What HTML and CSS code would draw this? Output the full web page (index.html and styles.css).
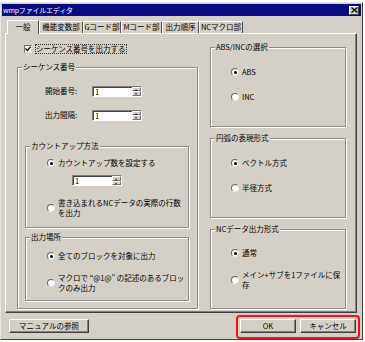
FILE: index.html
```html
<!DOCTYPE html>
<html lang="ja">
<head>
<meta charset="utf-8">
<title>wmpファイルエディタ</title>
<link rel="stylesheet" href="styles.css">
</head>
<body>
<div class="window">
  <div class="titlebar">
    <span class="title">wmpファイルエディタ</span>
    <span class="close"><svg width="7" height="6" viewBox="0 0 7 6"><path d="M0.5 0.5 L6.5 5.5 M6.5 0.5 L0.5 5.5" stroke="#000" stroke-width="1.3" fill="none"/></svg></span>
  </div>
  <div class="tabs">
    <div class="tab active w1">一般</div>
    <div class="tab w2">機能変数部</div>
    <div class="tab w3">Gコード部</div>
    <div class="tab w4">Mコード部</div>
    <div class="tab w5">出力順序</div>
    <div class="tab w6">NCマクロ部</div>
  </div>
  <div class="panel">
    <div class="col-left">
      <div class="check-row">
        <span class="checkbox"><svg width="6" height="6" viewBox="0 0 6 6"><path d="M0.5 2.5 L2.3 4.6 L5.6 0.8" stroke="#000" stroke-width="1.3" fill="none"/></svg></span>
        <span class="focus">シーケンス番号を出力する</span>
      </div>
      <div class="group g-seq">
        <div class="gtitle">シーケンス番号</div>
        <div class="field-row r1"><span class="flabel">開始番号:</span><span class="spin"><span class="spin-text">1</span><span class="spin-btns"><span class="sb up"></span><span class="sb down"></span></span></span></div>
        <div class="field-row r2"><span class="flabel">出力間隔:</span><span class="spin"><span class="spin-text">1</span><span class="spin-btns"><span class="sb up"></span><span class="sb down"></span></span></span></div>
        <div class="group g-count">
          <div class="gtitle">カウントアップ方法</div>
          <div class="option o-c1"><span class="radio on"></span><span>カウントアップ数を設定する</span></div>
          <div class="spin spin-c"><span class="spin-text">1</span><span class="spin-btns"><span class="sb up"></span><span class="sb down"></span></span></div>
          <div class="option two o-c2"><span class="radio"></span><span>書き込まれるNCデータの実際の行数<br>を出力</span></div>
        </div>
        <div class="group g-out">
          <div class="gtitle">出力場所</div>
          <div class="option o-o1"><span class="radio on"></span><span>全てのブロックを対象に出力</span></div>
          <div class="option two o-o2"><span class="radio"></span><span>マクロで “@1@” の記述のあるブロッ<br>クのみ出力</span></div>
        </div>
      </div>
    </div>
    <div class="col-right">
      <div class="group g-r">
        <div class="gtitle">ABS/INCの選択</div>
        <div class="options">
          <div class="option"><span class="radio on"></span><span>ABS</span></div>
          <div class="option"><span class="radio"></span><span>INC</span></div>
        </div>
      </div>
      <div class="group g-r">
        <div class="gtitle">円弧の表現形式</div>
        <div class="options">
          <div class="option"><span class="radio on"></span><span>ベクトル方式</span></div>
          <div class="option"><span class="radio"></span><span>半径方式</span></div>
        </div>
      </div>
      <div class="group g-r g-nc">
        <div class="gtitle">NCデータ出力形式</div>
        <div class="options">
          <div class="option"><span class="radio on"></span><span>通常</span></div>
          <div class="option two"><span class="radio"></span><span>メイン+サブを1ファイルに保<br>存</span></div>
        </div>
      </div>
    </div>
  </div>
  <div class="footer">
    <button class="btn btn-manual">マニュアルの参照</button>
    <div class="highlight">
      <button class="btn btn-ok">OK</button>
      <button class="btn btn-cancel">キャンセル</button>
    </div>
  </div>
</div>
</body>
</html>
```

FILE: styles.css
```css
* { box-sizing: border-box; }
html, body { margin: 0; padding: 0; background: #ffffff; }
body {
  font-family: "Noto Sans CJK JP", "Noto Sans", sans-serif;
  font-size: 7.5px;
  line-height: 8px;
  color: #000;
}
.window {
  width: 363px;
  height: 338px;
  margin-top: 2px;
  background: #d4d0c8;
  border: 1px solid;
  border-color: #e8e6e0 #404040 #404040 #e8e6e0;
  padding: 1px 1px 0 1px;
  display: flex;
  flex-direction: column;
}
.titlebar {
  height: 12px;
  background: #0a0a80;
  color: #fff;
  display: flex;
  align-items: center;
  justify-content: space-between;
  padding: 0 2px 0 1px;
}
.title { font-size: 7px; letter-spacing: -0.2px; }
.close {
  width: 10px;
  height: 9px;
  background: #d4d0c8;
  border: 1px solid;
  border-color: #fff #404040 #404040 #fff;
  display: flex;
  align-items: center;
  justify-content: center;
}
.tabs {
  margin-top: 4px;
  height: 13px;
  padding-left: 5px;
  display: flex;
  align-items: flex-end;
  position: relative;
  z-index: 1;
}
.tab {
  height: 12px;
  text-align: center;
  border-top: 1px solid #fff;
  border-left: 1px solid #fff;
  border-right: 1px solid #505050;
  border-radius: 1px 1px 0 0;
  line-height: 10px;
  white-space: nowrap;
}
.tab.active {
  height: 14px;
  margin-bottom: -1px;
  background: #d4d0c8;
  line-height: 12px;
}
.w1 { width: 32px; }
.w2 { width: 44px; }
.w3 { width: 38px; }
.w4 { width: 41px; }
.w5 { width: 37px; }
.w6 { width: 44px; }
.panel {
  margin-left: 3px;
  width: 352px;
  height: 280px;
  border: 1px solid;
  border-color: #fff #404040 #404040 #fff;
  box-shadow: inset -1px -1px 0 #808080;
  padding: 9px 0 0 11px;
  display: grid;
  grid-template-columns: 181px 136px;
  column-gap: 12px;
  align-items: start;
}
.check-row {
  height: 12px;
  display: flex;
  align-items: center;
  padding-left: 7px;
}
.checkbox {
  width: 8px;
  height: 8px;
  background: #fff;
  border: 1px solid;
  border-color: #707070 #e0e0e0 #e0e0e0 #707070;
  display: flex;
  align-items: center;
  justify-content: center;
}
.focus {
  margin-left: 3px;
  padding: 1px 1px;
  outline: 1px dotted #333;
  outline-offset: -1px;
  white-space: nowrap;
}
.group {
  border: 1px solid #8c8c8c;
  box-shadow: 1px 1px 0 #fff, inset 1px 1px 0 #fff;
}
.gtitle {
  margin: -5px 0 0 4px;
  padding: 0 1px;
  background: #d4d0c8;
  width: max-content;
  white-space: nowrap;
}
.g-seq {
  margin-top: 12px;
  height: 242px;
  width: 181px;
}
.field-row {
  height: 12px;
  display: flex;
  align-items: center;
  padding-left: 27px;
}
.r1 { margin-top: 14px; }
.r2 { margin-top: 12px; }
.flabel { width: 47px; }
.spin {
  width: 50px;
  height: 11px;
  background: #fff;
  border: 1px solid;
  border-color: #808080 #fff #fff #808080;
  box-shadow: inset 1px 1px 0 #404040;
  display: flex;
  align-items: stretch;
}
.spin-text { flex: 1; padding-left: 2px; line-height: 9px; }
.spin-btns { width: 9px; display: flex; flex-direction: column; }
.sb {
  flex: 1;
  background: #d4d0c8;
  border: 1px solid;
  border-color: #fff #707070 #707070 #fff;
  position: relative;
}
.sb::after {
  content: "";
  position: absolute;
  left: 2px;
  top: 1px;
  border-left: 1.5px solid transparent;
  border-right: 1.5px solid transparent;
}
.up::after { border-bottom: 2px solid #333; }
.down::after { border-top: 2px solid #333; }
.g-count {
  margin: 25px 8px 0 7px;
  height: 82px;
}
.option {
  height: 12px;
  display: flex;
  align-items: center;
  white-space: nowrap;
}
.option.two { height: 20px; line-height: 10px; }
.radio {
  width: 8px;
  height: 8px;
  border-radius: 50%;
  background: #fff;
  border: 1px solid;
  border-color: #6a6a6a #e8e8e8 #e8e8e8 #6a6a6a;
  margin-right: 3px;
  flex: none;
  position: relative;
}
.radio.on::after {
  content: "";
  position: absolute;
  left: 1.5px;
  top: 1.5px;
  width: 3px;
  height: 3px;
  border-radius: 50%;
  background: #000;
}
.o-c1 { margin-top: 7px; padding-left: 21px; }
.spin-c { margin: 6px 0 0 46px; }
.o-c2 { margin-top: 12px; padding-left: 21px; }
.g-out {
  margin: 9px 8px 0 7px;
  height: 64px;
}
.o-o1 { margin-top: 9px; padding-left: 21px; }
.o-o2 { margin-top: 11px; padding-left: 21px; }
.g-r {
  margin-top: 11px;
  height: 80px;
}
.g-r:first-child { margin-top: 4px; }
.options {
  padding: 15px 0 0 20px;
  display: flex;
  flex-direction: column;
  gap: 13px;
}
.g-nc .options { padding-top: 14px; gap: 11px; }
.footer {
  margin-top: 2px;
  height: 24px;
  display: flex;
  justify-content: space-between;
  align-items: flex-start;
  padding: 0 1px 0 7px;
}
.btn {
  font: inherit;
  color: #000;
  height: 14px;
  padding: 0;
  background: #d4d0c8;
  border: 1px solid;
  border-color: #fff #404040 #404040 #fff;
  box-shadow: inset -1px -1px 0 #808080;
  line-height: 12px;
}
.btn-manual { width: 80px; margin-top: 4px; }
.highlight {
  border: 2px solid #e8141c;
  border-radius: 4px;
  padding: 2px 2px 4px 2px;
  display: flex;
  gap: 4px;
}
.btn-ok, .btn-cancel { width: 56px; }
```
